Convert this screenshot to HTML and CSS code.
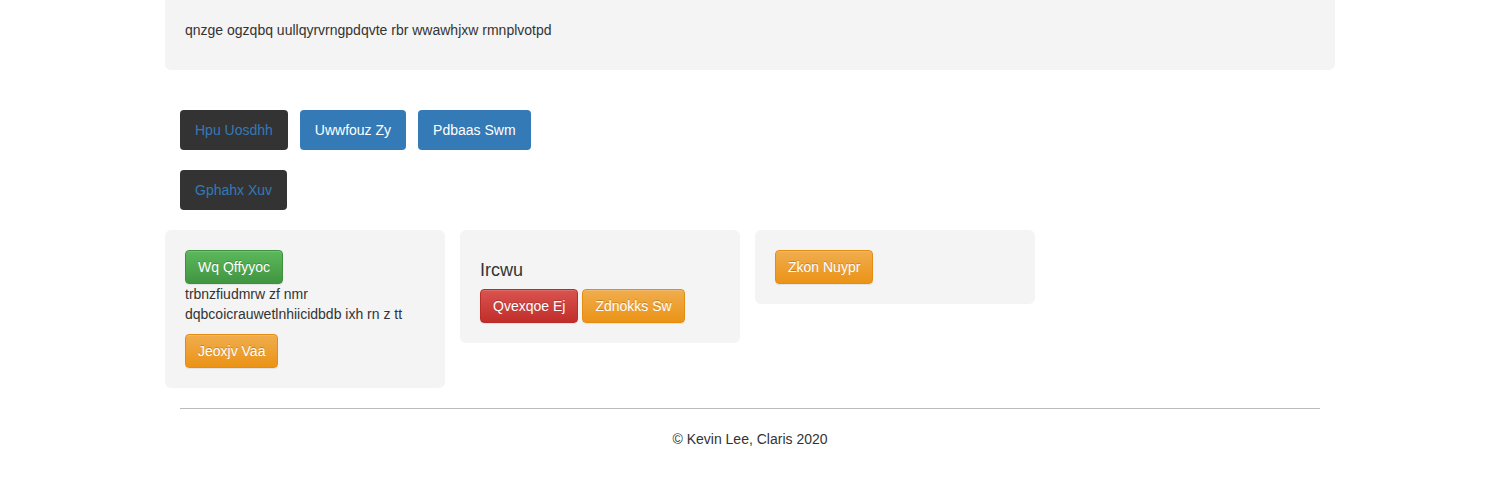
FILE: index.html
```html
<!DOCTYPE html>
<html>
<head>
<meta charset="utf-8">
<link rel="stylesheet" href="styles.css">
</head>
<body>
<div class="container">
  <div class="well"><p>qnzge ogzqbq uullqyrvrngpdqvte rbr wwawhjxw rmnplvotpd</p></div>
  <div class="nav-buttons">
    <div class="btn-row">
      <a class="nbtn nbtn-dark">Hpu Uosdhh</a>
      <a class="nbtn nbtn-blue">Uwwfouz Zy</a>
      <a class="nbtn nbtn-blue">Pdbaas Swm</a>
    </div>
    <div class="btn-row">
      <a class="nbtn nbtn-dark">Gphahx Xuv</a>
    </div>
  </div>
  <div class="cards">
    <div class="card">
      <button class="btn btn-success">Wq Qffyyoc</button>
      <p class="card-text">trbnzfiudmrw zf nmr dqbcoicrauwetlnhiicidbdb ixh rn z tt</p>
      <button class="btn btn-warning">Jeoxjv Vaa</button>
    </div>
    <div class="card">
      <h4 class="card-title">Ircwu</h4>
      <div class="btn-group">
        <button class="btn btn-danger">Qvexqoe Ej</button>
        <button class="btn btn-warning">Zdnokks Sw</button>
      </div>
    </div>
    <div class="card">
      <button class="btn btn-warning">Zkon Nuypr</button>
    </div>
  </div>
  <hr class="divider">
  <footer class="footer">© Kevin Lee, Claris 2020</footer>
</div>
</body>
</html>
```
FILE: styles.css
```css
* { box-sizing: border-box; }
body {
  margin: 0;
  font-family: "Liberation Sans", Arial, sans-serif;
  font-size: 14px;
  line-height: 20px;
  color: #333;
  background: #fff;
}
.container {
  width: 1170px;
  margin: 0 auto;
}
.well {
  background: #f4f4f4;
  border: 1px solid #f4f4f4;
  border-radius: 0 0 6px 6px;
  padding: 19px;
}
.well p { margin: 0 0 10px; }
.nav-buttons {
  margin-top: 40px;
  padding: 0 15px;
  display: flex;
  flex-direction: column;
  gap: 20px;
}
.btn-row {
  display: flex;
  gap: 12px;
}
.nbtn {
  display: inline-block;
  padding: 10px 15px;
  line-height: 20px;
  font-size: 14px;
  border-radius: 4px;
  text-decoration: none;
}
.nbtn-dark { background: #333; color: #337ab7; }
.nbtn-blue { background: #337ab7; color: #fff; }
.cards {
  margin-top: 20px;
  display: flex;
  gap: 15px;
  align-items: flex-start;
}
.card {
  width: 280px;
  background: #f4f4f4;
  border-radius: 6px;
  padding: 20px;
}
.card-text { margin: 0 0 10px; }
.card-title {
  margin: 10px 0 9px;
  font-size: 18px;
  font-weight: 500;
  line-height: 20px;
}
.btn-group { display: flex; gap: 4px; }
.btn {
  display: inline-block;
  font-family: inherit;
  font-size: 14px;
  line-height: 20px;
  padding: 6px 12px;
  border-radius: 4px;
  border: 1px solid transparent;
  color: #fff;
  text-shadow: 0 -1px 0 rgba(0,0,0,.2);
  box-shadow: inset 0 1px 0 rgba(255,255,255,.15), 0 1px 1px rgba(0,0,0,.075);
  cursor: pointer;
}
.btn-success {
  background: linear-gradient(to bottom, #5cb85c 0, #419641 100%);
  border-color: #3e8f3e;
}
.btn-warning {
  background: linear-gradient(to bottom, #f0ad4e 0, #eb9316 100%);
  border-color: #e38d13;
}
.btn-danger {
  background: linear-gradient(to bottom, #d9534f 0, #c12e2a 100%);
  border-color: #b92c28;
}
.divider {
  margin: 20px 15px 0;
  border: 0;
  border-top: 1px solid #bbb;
}
.footer {
  text-align: center;
  padding: 20px 0;
}
```
